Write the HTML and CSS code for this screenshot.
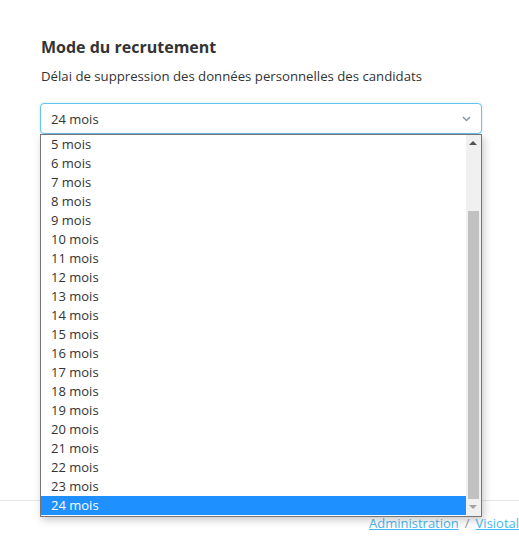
FILE: index.html
```html
<!DOCTYPE html>
<html lang="fr">
<head>
<meta charset="utf-8">
<link rel="stylesheet" href="styles.css">
</head>
<body>
<div class="page">
  <main class="content">
    <h2 class="title">Mode du recrutement</h2>
    <p class="label">Délai de suppression des données personnelles des candidats</p>
    <div class="select-wrap">
      <div class="select">
        <span>24 mois</span>
        <svg class="chev" width="9" height="6" viewBox="0 0 9 6"><path d="M1 1 L4.5 4.5 L8 1" fill="none" stroke="#8a93a6" stroke-width="1.5"/></svg>
      </div>
      <div class="dropdown">
        <ul class="options">
          <li>5 mois</li><li>6 mois</li><li>7 mois</li><li>8 mois</li><li>9 mois</li>
          <li>10 mois</li><li>11 mois</li><li>12 mois</li><li>13 mois</li><li>14 mois</li>
          <li>15 mois</li><li>16 mois</li><li>17 mois</li><li>18 mois</li><li>19 mois</li>
          <li>20 mois</li><li>21 mois</li><li>22 mois</li><li>23 mois</li><li class="sel">24 mois</li>
        </ul>
        <div class="scrollbar">
          <div class="arrow up"></div>
          <div class="track"><div class="thumb"></div></div>
          <div class="arrow down"></div>
        </div>
      </div>
    </div>
  </main>
  <footer class="footer">
    <a href="#">Administration</a><span class="sep">/</span><a href="#">Visiotalent</a>
  </footer>
</div>
</body>
</html>
```
FILE: styles.css
```css
* { box-sizing: border-box; }
html, body { margin: 0; padding: 0; background: #fff; }
body { font-family: "Open Sans", "Liberation Sans", sans-serif; color: #333; width: 519px; height: 540px; overflow: hidden; }
.page { display: flex; flex-direction: column; }
.content { padding: 36px 38px 0 40px; height: 500px; }
.title { margin: 0 0 0 1px; font-size: 16px; font-weight: 700; line-height: 22px; color: #333; }
.label { margin: 8px 0 0 1px; font-size: 13.2px; line-height: 20px; color: #333; }
.select-wrap { position: relative; margin-top: 17px; width: 442px; }
.select { height: 31px; border: 1px solid #66c3ee; border-radius: 4px; display: flex; align-items: center; justify-content: space-between; padding: 0 10px 0 10px; font-size: 13px; color: #333; box-shadow: 0 0 2px rgba(102,195,238,0.5); }
.chev { margin-right: 0; }
.dropdown { position: absolute; left: 0; top: 31px; width: 442px; height: 383px; border: 1px solid #767676; background: #fff; display: flex; box-shadow: 2px 3px 8px rgba(0,0,0,0.22); z-index: 5; }
.options { list-style: none; margin: 0; padding: 0; flex: 1; }
.options li { height: 19px; line-height: 19px; font-size: 13px; padding-left: 10px; color: #333; }
.options li.sel { background: #1e90ff; color: #fff; }
.scrollbar { width: 15px; background: #f0f0f0; display: flex; flex-direction: column; }
.arrow { height: 17px; position: relative; }
.arrow::after { content: ""; position: absolute; left: 3px; border-left: 4px solid transparent; border-right: 4px solid transparent; }
.arrow.up::after { top: 6px; border-bottom: 4px solid #505050; }
.arrow.down::after { top: 6px; border-top: 4px solid #a3a3a3; }
.track { flex: 1; display: flex; flex-direction: column; justify-content: flex-end; padding: 0 2px; }
.thumb { height: 288px; background: #c1c1c1; }
.footer { border-top: 1px solid #e6e6e6; height: 40px; padding: 13px 0 0 369px; font-size: 13px; white-space: nowrap; overflow: hidden; }
.footer a { color: #4ab6f0; text-decoration: underline; }
.sep { color: #999; margin: 0 6px; }
```
